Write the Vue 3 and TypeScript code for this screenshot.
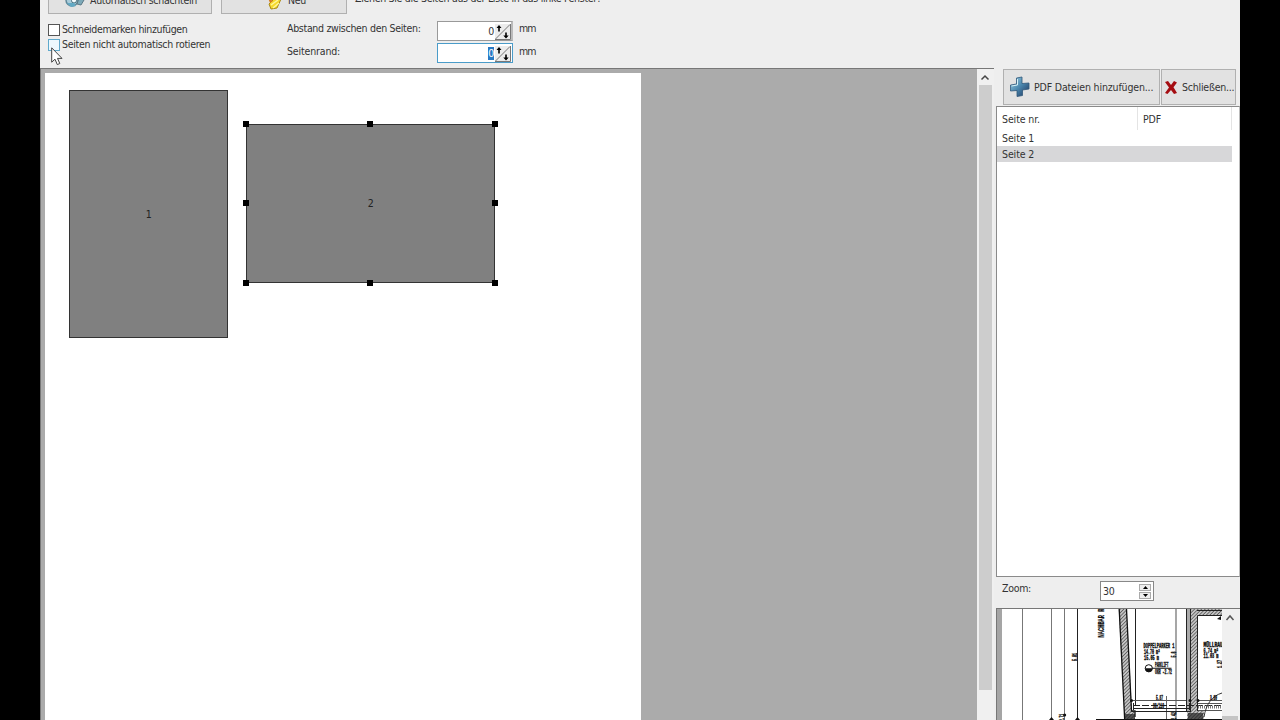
<script setup lang="ts">
import { ref } from 'vue'

interface PageItem {
  id: number
  x: number
  y: number
  w: number
  h: number
}

const items: PageItem[] = [
  { id: 1, x: 24, y: 17, w: 159, h: 248 },
  { id: 2, x: 201, y: 51, w: 249, h: 159 },
]
const selected = ref(2)
const handles = ['nw', 'n', 'ne', 'w', 'e', 'sw', 's', 'se']
const spacing = ref(0)
const margin = ref(0)
const zoom = ref(30)
</script>

<template>
  <div class="screen">
    <div class="window">
      <header class="toolbar">
        <div class="buttons">
          <button class="btn auto">
            <svg class="ic-auto" width="22" height="20" viewBox="0 0 22 20">
              <circle cx="8" cy="10" r="6" fill="#a9cbd9" stroke="#5f8798" stroke-width="1.5" />
              <circle cx="10" cy="10.500" r="2.500" fill="#f4fafc" stroke="#47707f" />
              <path d="M3 13l4 4 5-1-2-3z" fill="#62a9c4" />
              <path d="M15 8l5 2-3 5-4-1z" fill="#7da9b8" stroke="#5b7986" />
            </svg>
            <span class="t-auto">Automatisch schachteln</span>
          </button>
          <button class="btn new">
            <svg class="ic-new" width="16" height="20" viewBox="0 0 16 20">
              <path d="M3 14l8-8 4 3-4 9-6 1z" fill="#f5d92c" stroke="#a98812" />
              <path d="M5 15l7-5M7 18l6-5" stroke="#fff59a" stroke-width="1.5" />
              <path d="M2 8l5 3-3 2z" fill="#d67b20" />
            </svg>
            <span class="t-new">Neu</span>
          </button>
          <span class="hint">Ziehen Sie die Seiten aus der Liste in das linke Fenster!</span>
        </div>
        <div class="options">
          <div class="checks">
            <label><i class="box"></i><span class="t-cut">Schneidemarken hinzufügen</span></label>
            <label><i class="box hot"></i><span class="t-rot">Seiten nicht automatisch rotieren</span></label>
          </div>
          <div class="labels">
            <span class="t-gap">Abstand zwischen den Seiten:</span>
            <span class="t-mar">Seitenrand:</span>
          </div>
          <div class="fields">
            <div v-for="(v, i) in [spacing, margin]" :key="i" class="field" :class="{ focus: i === 1 }">
              <span class="num">{{ v }}</span>
              <svg width="16" height="17" viewBox="0 0 16 17">
                <rect x="0" y="1" width="15" height="15" fill="#ececec" />
                <path d="M0 16.500H15.500V1" fill="none" stroke="#777" />
                <path d="M.5 16L15 1.500" stroke="#777" />
                <path d="M4 2L6.500 5H4.800V8.500H3.200V5H1.500ZM11 15.500L8.300 12.500H10.200V9.500H11.800V12.500H13.700Z" fill="#000" />
              </svg>
            </div>
          </div>
          <div class="units"><span>mm</span><span>mm</span></div>
        </div>
        <svg class="cursor" width="12" height="19" viewBox="0 0 12 19">
          <path d="M.7.8V15.200L4 12.200L6.300 17.600L8.800 16.500L6.500 11.400H11Z" fill="#fff" stroke="#444" />
        </svg>
      </header>

      <main class="body">
        <section class="canvas">
          <div class="sheet">
            <div
              v-for="p in items"
              :key="p.id"
              class="page"
              :class="{ sel: p.id === selected }"
              :style="{ left: p.x + 'px', top: p.y + 'px', width: p.w + 'px', height: p.h + 'px' }"
            >
              <span>{{ p.id }}</span>
              <template v-if="p.id === selected">
                <i v-for="h in handles" :key="h" class="handle" :class="h"></i>
              </template>
            </div>
          </div>
          <div class="vscroll">
            <svg width="16" height="16" viewBox="0 0 16 16"><path d="M4.500 10.500L8 7L11.500 10.500" fill="none" stroke="#444" stroke-width="1.500" /></svg>
            <div class="thumb"></div>
          </div>
        </section>

        <aside class="side">
          <div class="actions">
            <button class="btn add">
              <svg width="22" height="22" viewBox="0 0 22 22">
                <defs>
                  <linearGradient id="plus" x1="0" y1="0" x2="1" y2="1">
                    <stop offset="0" stop-color="#9fd3e6" />
                    <stop offset=".5" stop-color="#4a86ad" />
                    <stop offset="1" stop-color="#1c3159" />
                  </linearGradient>
                </defs>
                <path d="M7.500 2L13 1V7.500L20 7V13L13.500 14V19.500L8 20.500V14.500L1.500 15V9L7.500 8Z" fill="url(#plus)" stroke="#31587a" stroke-width=".8" />
                <path d="M8.500 3V9L2.500 10" fill="none" stroke="#d5f0f7" />
              </svg>
              <span class="t-add">PDF Dateien hinzufügen...</span>
            </button>
            <button class="btn close">
              <svg width="14" height="15" viewBox="0 0 14 15">
                <path d="M1 2L4 1L7 5L10 1L13 2.500L9.500 7.300L13 13L10 14L7 10L3.500 14L1 13L5 7.500Z" fill="#a50d12" />
              </svg>
              <span class="t-close">Schließen...</span>
            </button>
          </div>
          <div class="list">
            <div class="row head"><span class="c1">Seite nr.</span><span class="c2">PDF</span></div>
            <div v-for="p in items" :key="p.id" class="row" :class="{ on: p.id === selected }">
              <span>Seite {{ p.id }}</span>
            </div>
          </div>
          <div class="zoombar">
            <span class="t-zoom">Zoom:</span>
            <div class="zoomfield">
              <span>{{ zoom }}</span>
              <div class="spin">
                <i><svg width="5" height="3" viewBox="0 0 5 3"><path d="M0 3L2.500 0L5 3Z" /></svg></i>
                <i><svg width="5" height="3" viewBox="0 0 5 3"><path d="M0 0L2.500 3L5 0Z" /></svg></i>
              </div>
            </div>
          </div>
          <div class="preview">
            <svg class="plan" width="220" height="111" viewBox="1002 609 220 111">
              <defs>
                <pattern id="hatch" width="2.500" height="2.500" patternUnits="userSpaceOnUse" patternTransform="rotate(45)">
                  <rect width="2.500" height="2.500" fill="#c4c4c4" />
                  <path d="M0 0V2.500" stroke="#444" stroke-width="1.300" />
                </pattern>
              </defs>
              <g stroke="#666" fill="none">
                <path d="M1022.500 609V720M1051.500 609V720M1064.500 609V720" stroke="#777" />
                <path d="M1077.500 609V720M1135.500 609V705" stroke="#222" />
                <path d="M1176 609V720" stroke="#777" stroke-width="1.300" />
                <path d="M1131 700.500H1222" stroke="#555" />
                <path d="M1166.500 696V720" />
              </g>
              <path d="M1118.700 609H1126.700L1132 711H1135V720H1124.500Z" fill="url(#hatch)" />
              <path d="M1119.200 609L1124.700 720M1126.500 609L1131.500 711H1135V717" fill="none" stroke="#111" stroke-width="1.300" />
              <path d="M1186 609h4v102h-4z" fill="#aaa" />
              <path d="M1190 609H1222V615H1197.500V711H1204V720H1187V712H1190Z" fill="url(#hatch)" />
              <path d="M1186.500 609V712M1190.500 609V712M1222 615.500H1197.500V711M1197 610.500H1222" fill="none" stroke="#222" />
              <path d="M1125 714h10v6h-10zM1188 713h15v7h-15z" fill="#222" opacity=".7" />
              <path d="M1132 711.500H1190M1133 708.500H1190M1133.500 703V710M1189.500 703V710" fill="none" stroke="#222" />
              <path d="M1133 705.500H1222" stroke="#222" stroke-dasharray="7 2" />
              <path d="M1198 703.500H1222M1198 710.500H1222" fill="none" stroke="#555" />
              <path d="M1198 707H1222" stroke="#777" stroke-width="3" stroke-dasharray="1 1" />
              <path d="M1204 717C1206 704 1212 696 1222 693" fill="none" stroke="#333" />
              <path d="M1096 719.500H1222" stroke="#111" />
              <g fill="#111">
                <path d="M1051.500 717l2.500 3h-5zM1077.500 717l2.500 3h-5z" />
                <circle cx="1064.700" cy="715" r="1.500" />
                <circle cx="1131.500" cy="700.500" r="1.500" />
                <circle cx="1190" cy="700.500" r="1.500" />
                <circle cx="1198" cy="700.500" r="1.500" />
                <path d="M1217 619l4-3v4z" />
              </g>
              <circle cx="1148.800" cy="668.300" r="3.600" fill="#fff" stroke="#111" />
              <path d="M1145.200 668.300a3.600 3.600 0 0 0 7.200 0zM1152 667.800h19.500v1h-19.500z" fill="#111" />
              <g class="cad">
                <text x="1143.500" y="648" textLength="31" lengthAdjust="spacingAndGlyphs">DOPPELPARKER 1</text>
                <text x="1144" y="654.300" textLength="16" lengthAdjust="spacingAndGlyphs">14.70 m²</text>
                <text x="1144" y="660.300" textLength="15" lengthAdjust="spacingAndGlyphs">15.05 m</text>
                <text x="1155" y="666.500" textLength="13.500" lengthAdjust="spacingAndGlyphs">PARKLIFT</text>
                <text x="1155" y="674" textLength="17" lengthAdjust="spacingAndGlyphs">OKR -2.72</text>
                <text x="1203.500" y="647" textLength="22" lengthAdjust="spacingAndGlyphs">MÜLLRAUM</text>
                <text x="1203.500" y="652.500" textLength="15" lengthAdjust="spacingAndGlyphs">6.74 m²</text>
                <text x="1203.500" y="657.500" textLength="15" lengthAdjust="spacingAndGlyphs">11.03 m</text>
                <text x="1156" y="699.500" textLength="7" lengthAdjust="spacingAndGlyphs">5.87</text>
                <text x="1153" y="707.500" textLength="11" lengthAdjust="spacingAndGlyphs">90/110</text>
                <text x="1210" y="699.500" textLength="7" lengthAdjust="spacingAndGlyphs">3.80</text>
                <text transform="translate(1077 661) rotate(-90)" textLength="8" lengthAdjust="spacingAndGlyphs">5.81</text>
                <text transform="translate(1064 721) rotate(-90)" textLength="7" lengthAdjust="spacingAndGlyphs">2.71</text>
                <text transform="translate(1175.500 657.500) rotate(-90)" textLength="6" lengthAdjust="spacingAndGlyphs">5.8</text>
                <text transform="translate(1176 720) rotate(-90)" textLength="8" lengthAdjust="spacingAndGlyphs">2.42</text>
                <text transform="translate(1221.500 668) rotate(-90)" textLength="8" lengthAdjust="spacingAndGlyphs">1.27</text>
                <text class="big" transform="translate(1103.700 637.500) rotate(-90)" textLength="29" lengthAdjust="spacingAndGlyphs">NACHBAR R</text>
              </g>
            </svg>
            <div class="pscroll">
              <svg width="16" height="18" viewBox="0 0 16 18"><path d="M4.500 11L8 7L11.500 11" fill="none" stroke="#555" stroke-width="1.500" /></svg>
              <div class="pthumb"></div>
            </div>
          </div>
        </aside>
      </main>
    </div>
  </div>
</template>

<style>
html, body { margin: 0; overflow: hidden; background: #000; }
</style>

<style scoped>
* { box-sizing: border-box; }
.screen {
  width: 1280px; height: 720px; padding: 0 40px; overflow: hidden; background: #000;
  font: 10.5px/15px "DejaVu Sans Condensed", "DejaVu Sans", sans-serif; font-stretch: condensed; color: #333; letter-spacing: -0.3px;
}
svg { display: block; flex: none; }
span { white-space: nowrap; }
.window { width: 1200px; height: 720px; overflow: hidden; background: #eee; display: flex; flex-direction: column; }
.toolbar { height: 68px; flex: none; position: relative; overflow: hidden; display: flex; flex-direction: column; padding-left: 8px; }
.buttons { display: flex; gap: 9px; height: 28px; margin-top: -14px; flex: none; }
.btn {
  font: inherit; letter-spacing: inherit; color: #333; margin: 0; padding: 0; background: #e2e2e2; border: 1px solid #b0b0b0;
  display: flex; align-items: center; flex: none;
}
.auto { width: 164px; padding-left: 15px; gap: 4px; }
.new { width: 126px; padding-left: 44px; gap: 6px; }
.hint { margin: 5px 0 0 -1px; }
.options { display: flex; align-items: flex-start; }
.checks { width: 239px; padding-top: 8px; display: flex; flex-direction: column; }
.checks label { display: flex; align-items: center; gap: 2px; height: 15px; }
.t-cut { letter-spacing: -0.38px; }
.box { width: 12px; height: 12px; border: 1px solid #555; background: #fff; }
.hot { border-color: #5fa9cc; background: #edf8fd; }
.labels { width: 150px; padding-top: 7px; display: flex; flex-direction: column; gap: 8px; }
.t-mar { letter-spacing: -0.15px; }
.fields { width: 77px; padding-top: 7px; display: flex; flex-direction: column; gap: 2px; }
.field {
  height: 20px; width: 76px; background: #fff; border: 1px solid #999; display: flex; justify-content: flex-end; align-items: center;
  border-right: 2px solid #bbb;
}
.num { line-height: 13px; margin-right: 1px; }
.focus { border-color: #4a9cc9; border-right-width: 1px; padding-right: 1px; }
.focus .num { background: #2879c4; color: #fff; }
.units { padding: 7px 0 0 5px; display: flex; flex-direction: column; gap: 8px; letter-spacing: -1px; }
.cursor { position: absolute; left: 11px; top: 47px; }

.body { flex: 1; min-height: 0; display: flex; gap: 2px; }
.canvas {
  width: 954px; flex: none; background: #ababab; border-top: 1px solid #777; border-left: 1px solid #777;
  display: flex; justify-content: space-between; overflow: hidden;
}
.sheet { position: relative; width: 596px; height: 660px; margin: 4px 0 0 4px; background: #fff; }
.page {
  position: absolute; background: #808080; border: 1px solid #333; color: #222;
  display: flex; align-items: center; justify-content: center;
}
.handle { position: absolute; width: 6px; height: 6px; background: #000; }
.nw, .n, .ne { top: -4px; }
.w, .e { top: calc(50% - 3.600px); }
.sw, .s, .se { bottom: -4px; }
.nw, .w, .sw { left: -4px; }
.n, .s { left: calc(50% - 3.6px); }
.ne, .e, .se { right: -4px; }
.vscroll { width: 17px; background: #f0f0f0; padding-right: 1px; display: flex; flex-direction: column; }
.thumb { height: 605px; margin-left: 2px; width: 13px; background: #cdcdcd; }

.side { width: 244px; display: flex; flex-direction: column; }
.actions { height: 38px; flex: none; padding: 1px 0 0 7px; display: flex; gap: 1px; }
.actions .btn { height: 36px; letter-spacing: -0.15px; }
.add { width: 157px; padding-left: 5px; gap: 3px; }
.close { width: 75px; padding-left: 2px; gap: 4px; }
.actions .close { letter-spacing: -0.22px; }
.list { height: 471px; flex: none; background: #fff; border: 1px solid #8a8a8a; border-right-color: #bbb; padding-right: 7px; letter-spacing: -0.1px; }
.row { height: 16px; padding-left: 5px; display: flex; align-items: center; }
.head { height: 23px; align-items: stretch; line-height: 24px; }
.c1 { width: 136px; border-right: 1px solid #e4e4e4; }
.c2 { flex: 1; padding-left: 5px; border-right: 1px solid #e4e4e4; }
.on { background: #d7d7d9; }
.zoombar { height: 31px; flex: none; display: flex; padding: 4px 0 0 6px; }
.t-zoom { width: 98px; }
.zoomfield { width: 54px; height: 20px; background: #fff; border: 1px solid #888; display: flex; justify-content: space-between; align-items: center; padding: 0 2px 0 2px; }
.spin { display: flex; flex-direction: column; gap: 1px; }
.spin i { width: 12px; height: 7px; background: #eee; border: 1px solid #aaa; display: flex; align-items: center; justify-content: center; }
.preview { height: 112px; flex: none; border-top: 1px solid #777; border-left: 1px solid #777; background: #a5a5a5; padding-left: 5px; display: flex; }
.plan { background: #fff; }
.cad text { font: bold 6.5px "Liberation Mono", monospace; letter-spacing: 0; fill: #111; stroke: #111; stroke-width: .4px; }
.cad .big { font-size: 9px; stroke-width: .2px; }
.pscroll { width: 18px; background: #f0f0f0; display: flex; flex-direction: column; justify-content: space-between; }
.pthumb { height: 4px; width: 16px; background: #c4c4c4; }
</style>
